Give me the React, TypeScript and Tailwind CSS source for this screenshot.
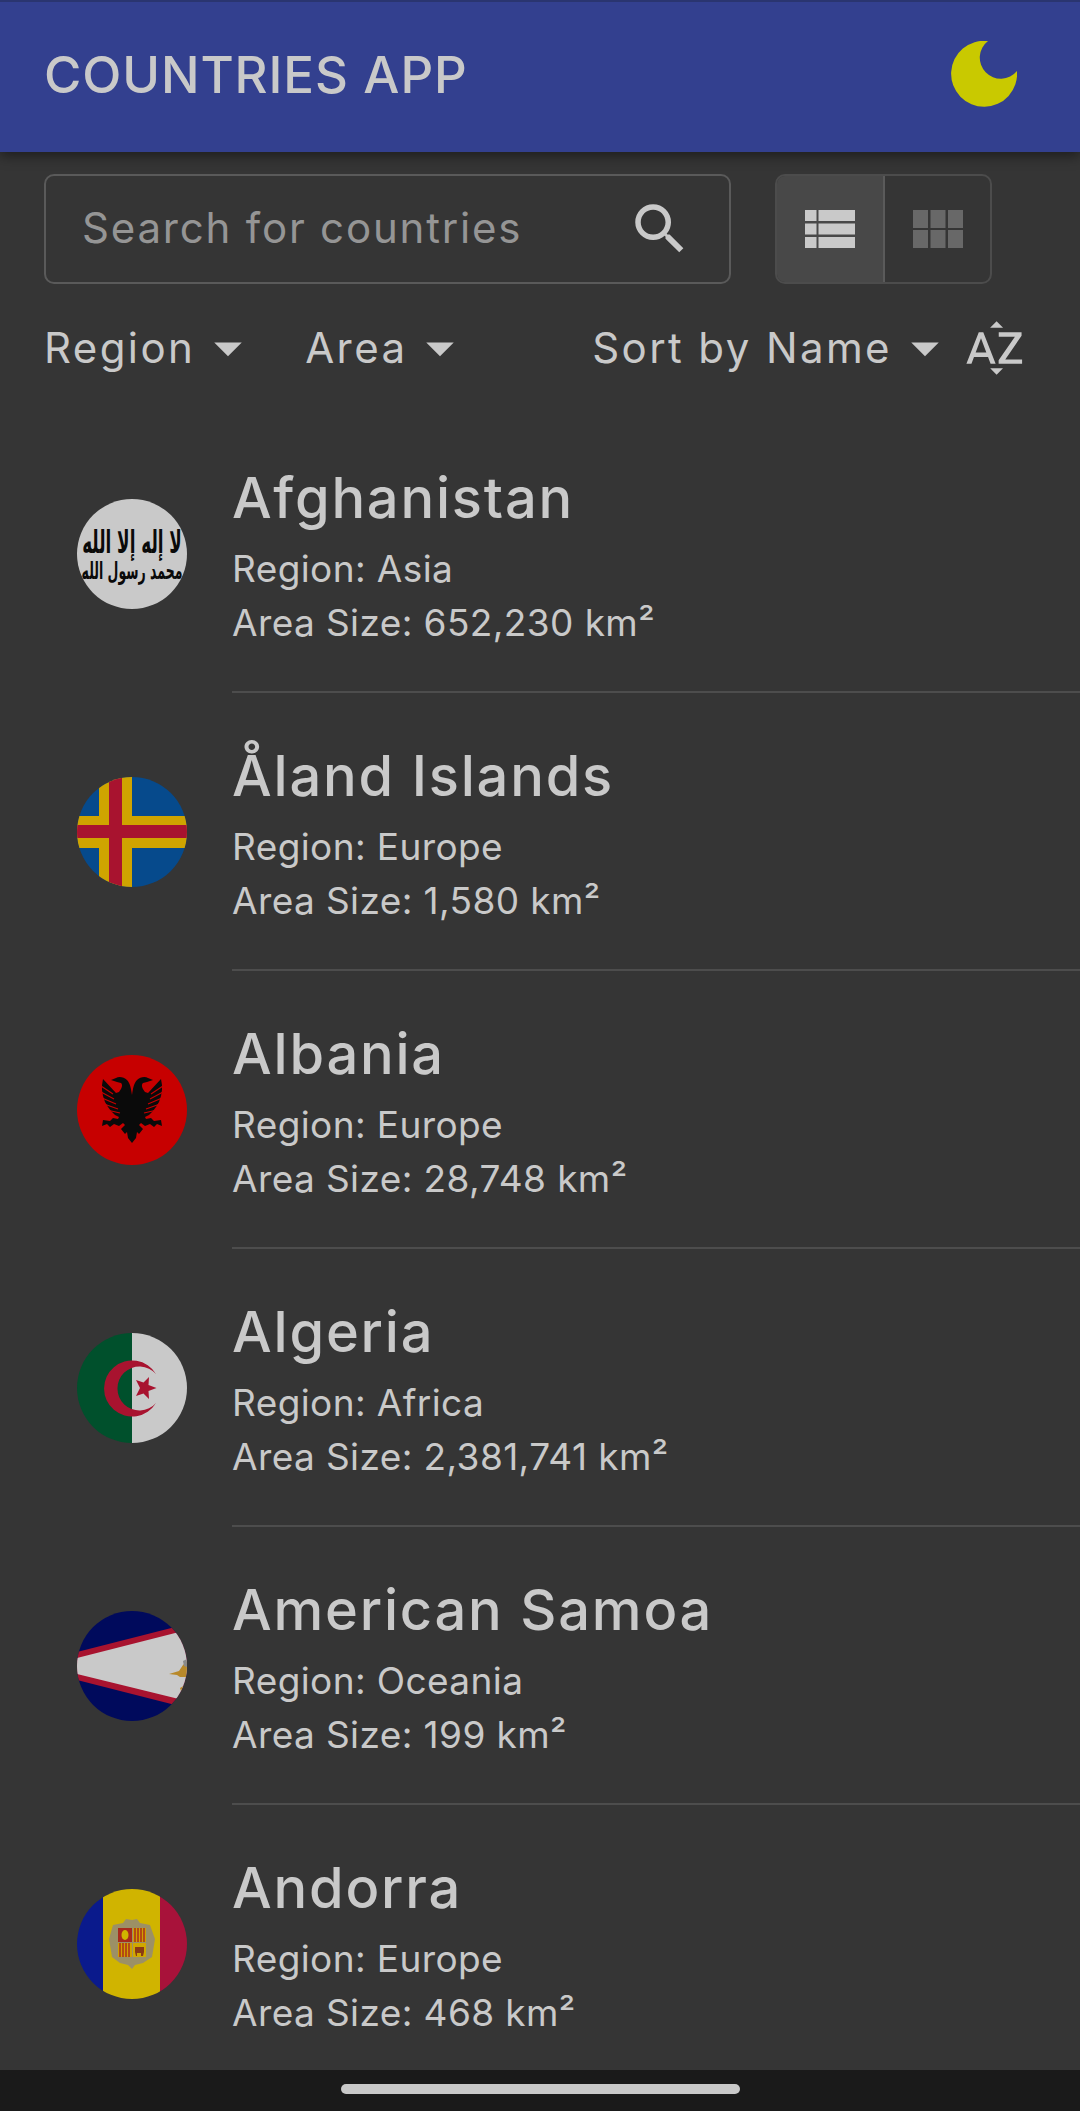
import React from "react";
import { MdSearch, MdArrowDropDown, MdSortByAlpha } from "react-icons/md";

function EagleHalf() {
  return (
    <g>
      <path d="M55 40C56 33 57 28 60 25C63 22 68 21 71 23L76 25L70 27L66 28C64 30 65 33 68 37L71 38L84 24L85 30L85 35L84 41L82 47L79 52L76 56L72 60L68 62L69 64L74 63L77 66L84 65L85 71L80 69L77 72L73 69L68 71L64 68L62 70L66 74L62 79L60 77L59 83L55 88Z" />
      <g stroke="#c70000" strokeWidth="1.1" fill="none">
        <path d="M86 31L74 39" />
        <path d="M86 37L73 44" />
        <path d="M85 43L71 49" />
        <path d="M83 49L69 54" />
        <path d="M80 55L67 58" />
      </g>
    </g>
  );
}

function AfghanistanFlag() {
  return (
    <svg viewBox="0 0 110 110" className="w-full h-full">
      <rect width="110" height="110" fill="#c9c9c9" />
      <g fill="#0a0a0a" fontFamily="DejaVu Sans" fontWeight="700" textAnchor="middle" direction="rtl">
        <text transform="translate(55 54) scale(1.05 2)" fontSize="16">لا إله إلا الله</text>
        <text transform="translate(55 80) scale(1 1.9)" fontSize="12.5">محمد رسول الله</text>
      </g>
    </svg>
  );
}

function AlandFlag() {
  return (
    <svg viewBox="0 0 110 110" className="w-full h-full">
      <rect width="110" height="110" fill="#064a8c" />
      <rect x="22" width="33" height="110" fill="#cfa400" />
      <rect y="39" width="110" height="32" fill="#cfa400" />
      <rect x="32" width="13" height="110" fill="#a8132f" />
      <rect y="48" width="110" height="13" fill="#a8132f" />
    </svg>
  );
}

function AlbaniaFlag() {
  return (
    <svg viewBox="0 0 110 110" className="w-full h-full">
      <rect width="110" height="110" fill="#c70000" />
      <g fill="#0a0a0a">
        <EagleHalf />
        <g transform="translate(110 0) scale(-1 1)">
          <EagleHalf />
        </g>
      </g>
    </svg>
  );
}

function AlgeriaFlag() {
  return (
    <svg viewBox="0 0 110 110" className="w-full h-full">
      <rect width="55" height="110" fill="#00502c" />
      <rect x="55" width="55" height="110" fill="#c9c9c9" />
      <path d="M79 41A28 28 0 1 0 79 70A22 22 0 1 1 79 41Z" fill="#a8132f" />
      <polygon
        points="79.5,55 71.5,58 72,66 66.5,60.5 59,63 63,55 59,47 66.5,49.5 72,44 71.5,52"
        fill="#a8132f"
      />
    </svg>
  );
}

function SamoaFlag() {
  return (
    <svg viewBox="0 0 110 110" className="w-full h-full">
      <rect width="110" height="110" fill="#000a5c" />
      <polygon points="0,41 110,13 110,97 0,69" fill="#a8132f" />
      <polygon points="0,47 110,19 110,90 0,63" fill="#c9c9c9" />
      <path d="M92 63L102 60L106 54L110 50V66L103 66L100 64Z" fill="#b8892a" />
      <path d="M103 77L110 73V81L105 83Z" fill="#b8892a" />
      <path d="M106 50L110 48V56L107 55Z" fill="#8a8a8a" />
    </svg>
  );
}

function AndorraFlag() {
  return (
    <svg viewBox="0 0 110 110" className="w-full h-full">
      <rect width="27" height="110" fill="#0a1a8c" />
      <rect x="26" width="57" height="110" fill="#d0b400" />
      <rect x="83" width="27" height="110" fill="#a8123a" />
      <path d="M36 36L46 34L49 30L55 31L60 30L63 34L73 36L78 50L75 68L66 74L58 76L55 80L51 76L43 74L35 68L32 50Z" fill="#9c9066" />
      <rect x="41" y="39" width="14" height="14" fill="#a82a1c" />
      <ellipse cx="48" cy="46" rx="3.5" ry="5" fill="#d0b400" />
      <rect x="56" y="39" width="13" height="14" fill="#d0a000" />
      <path d="M58 39v14M61 39v14M64 39v14M67 39v14" stroke="#a8261c" strokeWidth="1.4" />
      <rect x="41" y="54" width="14" height="14" fill="#d0a000" />
      <path d="M43 54v14M46 54v14M49 54v14M52 54v14" stroke="#a8261c" strokeWidth="1.4" />
      <rect x="56" y="54" width="13" height="14" fill="#d0a800" />
      <path d="M58 58H67V63L66 67H64V64H60V67H59L58 63Z" fill="#8a3a14" />
    </svg>
  );
}

const countries = [
  { name: "Afghanistan", region: "Asia", area: "652,230", Flag: AfghanistanFlag },
  { name: "Åland Islands", region: "Europe", area: "1,580", Flag: AlandFlag },
  { name: "Albania", region: "Europe", area: "28,748", Flag: AlbaniaFlag },
  { name: "Algeria", region: "Africa", area: "2,381,741", Flag: AlgeriaFlag },
  { name: "American Samoa", region: "Oceania", area: "199", Flag: SamoaFlag },
  { name: "Andorra", region: "Europe", area: "468", Flag: AndorraFlag },
];

function FilterSelect({ label, className }: { label: string; className?: string }) {
  return (
    <div className={`flex items-center ${className ?? ""}`}>
      <span className="text-[42px] leading-[66px] tracking-[2.4px] text-[#c9c9c9]">{label}</span>
      <MdArrowDropDown className="w-[66px] h-[66px] text-[#c9c9c9] -mr-[7px]" />
    </div>
  );
}

export default function App() {
  return (
    <div className="h-[2111px] w-[1080px] flex flex-col overflow-hidden bg-[#353535] font-['Inter',sans-serif]">
      <header className="relative z-10 h-[152px] shrink-0 flex items-center justify-between pl-[44px] pr-[63px] pb-[6px] bg-[#33408f] border-t-2 border-[#2a3570] shadow-[0_4px_12px_rgba(0,0,0,0.45)]">
        <h1 className="text-[51px] font-medium text-[#c9c9c9] leading-none tracking-[0.9px]">COUNTRIES APP</h1>
        <svg viewBox="0 0 66 66" className="w-[66px] h-[66px]">
          <path d="M37 0A33 33 0 1 0 66 30A21 21 0 1 1 37 0Z" fill="#c9c900" />
        </svg>
      </header>

      <div className="flex items-center pl-[44px] pt-[22px]">
        <div className="w-[687px] h-[110px] flex items-center justify-between pl-[36px] pr-[36px] rounded-[10px] border-2 border-[#5a5a5a]">
          <span className="text-[42px] text-[#959595] tracking-[1.8px] mb-[4px]">Search for countries</span>
          <MdSearch className="w-[66px] h-[66px] text-[#c9c9c9]" />
        </div>
        <div className="ml-[44px] w-[217px] h-[110px] flex rounded-[10px] border-2 border-[#4c4c4c] overflow-hidden">
          <div className="w-[108px] flex items-center justify-center bg-[#484848] border-r-2 border-[#5a5a5a]">
            <svg viewBox="0 0 50 38" className="w-[50px] h-[38px]" fill="#c9c9c9">
              <rect width="11.5" height="11" />
              <rect x="13.5" width="36.5" height="11" />
              <rect y="13.5" width="11.5" height="11" />
              <rect x="13.5" y="13.5" width="36.5" height="11" />
              <rect y="27" width="11.5" height="11" />
              <rect x="13.5" y="27" width="36.5" height="11" />
            </svg>
          </div>
          <div className="flex-1 flex items-center justify-center">
            <svg viewBox="0 0 50 38" className="w-[50px] h-[38px]" fill="#686868">
              <rect width="15" height="18" />
              <rect x="17.5" width="15" height="18" />
              <rect x="35" width="15" height="18" />
              <rect y="20" width="15" height="18" />
              <rect x="17.5" y="20" width="15" height="18" />
              <rect x="35" y="20" width="15" height="18" />
            </svg>
          </div>
        </div>
      </div>

      <div className="flex items-center pl-[44px] pr-[52px] pt-[31px]">
        <FilterSelect label="Region" />
        <FilterSelect label="Area" className="ml-[51px]" />
        <FilterSelect label="Sort by Name" className="ml-auto" />
        <MdSortByAlpha className="ml-[11px] w-[66px] h-[66px] text-[#c9c9c9]" />
      </div>

      <ul className="flex-1 overflow-hidden mt-[34px]">
        {countries.map(({ name, region, area, Flag }) => (
          <li key={name} className="h-[278px] flex items-center pl-[77px]">
            <div className="w-[110px] h-[110px] shrink-0 rounded-full overflow-hidden">
              <Flag />
            </div>
            <div className="ml-[45px] flex-1 h-full flex flex-col justify-center pt-[6px] border-b-2 border-[#4d4d4d] text-[#c9c9c9]">
              <div className="text-[56px] font-medium leading-[72px] tracking-[1.8px] mb-[8px]">{name}</div>
              <div className="text-[37px] leading-[54px] tracking-[0.4px]">Region: {region}</div>
              <div className="text-[37px] leading-[54px] tracking-[0.4px]">Area Size: {area} km²</div>
            </div>
          </li>
        ))}
      </ul>

      <div className="h-[41px] shrink-0 flex justify-center pt-[14px] bg-[#1a1a1a]">
        <div className="w-[399px] h-[10px] rounded-full bg-[#c9c9c9]" />
      </div>
    </div>
  );
}
